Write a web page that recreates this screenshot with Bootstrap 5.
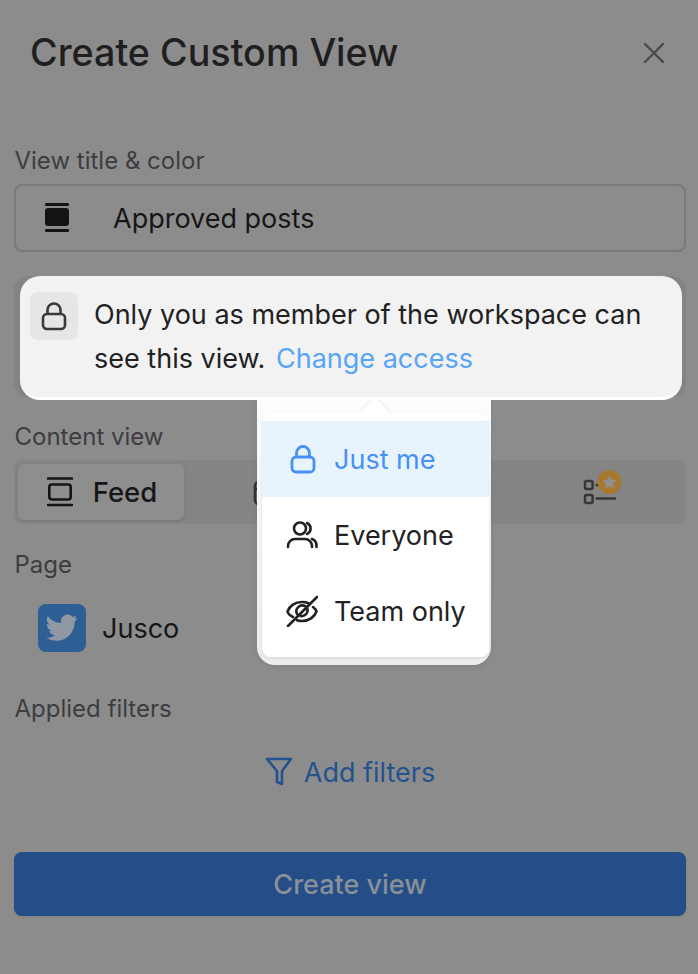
<!DOCTYPE html>
<html lang="en">
<head>
  <meta charset="UTF-8" />
  <meta name="viewport" content="width=device-width, initial-scale=1.0" />
  <title>Create Custom View</title>
  <link href="https://cdn.jsdelivr.net/npm/bootstrap@5.3.3/dist/css/bootstrap.min.css" rel="stylesheet">
  <style>
    html, body { height: 100%; }
    body { background: #8c8c8c; font-family: Inter, "Liberation Sans", sans-serif; color: #161617; overflow: hidden; }
    .sheet { position: relative; width: 698px; height: 974px; padding: 0 12px 0 14px; }
    .sheet-head { height: 106px; margin-bottom: 41px; padding: 0 19px 0 16px; }
    .sheet-title { font-size: 37.7px; font-weight: 500; margin: 0; color: #1f1f20; }
    .field-label { display: block; font-size: 24px; line-height: 28px; color: #3d3d40; margin: 0; padding-left: .5px; }
    .label-content { margin-top: 26px; }
    .label-page { margin-top: 27px; }
    .label-filters { margin-top: 43px; }
    .row-text { padding-top: 2px; }
    .title-box { height: 68px; margin-top: 9px; border: 2px solid #7a7a7a; border-radius: 8px; padding-left: 28px; font-size: 27px; gap: 43px; }
    .access-ghost { height: 121px; margin-top: 24px; background: #838383; border-radius: 14px; }
    .view-tabs { height: 64px; margin-top: 9px; background: #848484; border-radius: 8px; padding: 4px 4px; }
    .view-tab { flex: 1; height: 56px; border-radius: 6px; gap: 20px; font-size: 27.5px; font-weight: 500; }
    .view-tab.on { background: #8e8e8e; box-shadow: 0 1px 3px rgba(0,0,0,.12); }
    .feed-ico { margin-left: 2px; }
    .cal-ico { margin-right: 3px; }
    .star-ico { margin-left: 5px; overflow: visible; }
    .page-row { height: 48px; margin-top: 25px; padding-left: 24px; gap: 16px; font-size: 27px; }
    .page-mark { width: 48px; height: 48px; border-radius: 8px; background: #2d5f94; }
    .filter-link { color: #24528f; font-size: 27px; gap: 11px; height: 48px; margin-top: 25px; }
    .create-btn { height: 64px; margin-top: 56px; width: 100%; padding-top: 8px; background: #254e88; border: 0; border-radius: 8px; color: #8a9098; font-size: 27px; font-weight: 500; box-shadow: 0 1px 2px rgba(0,0,0,.1); }
    .create-btn:hover { background: #254e88; color: #8a9098; }
    .access-tip { position: absolute; left: 20px; top: 276px; width: 662px; height: 124px; background: #f2f2f2; border-bottom: 3px solid #fff; border-radius: 20px; padding: 16px 10px; gap: 16px; font-size: 27px; line-height: 44px; color: #212122; z-index: 2; }
    .tip-lock { flex: 0 0 48px; height: 48px; border-radius: 8px; background: #e6e6e6; }
    .tip-text { padding-top: 1px; }
    .tip-text a { color: #56a5f7; text-decoration: none; margin-left: 3px; }
    .access-menu { position: absolute; left: 257px; top: 397px; width: 234px; height: 268px; background: linear-gradient(#fdfdfd, #ececec); border-radius: 0 0 18px 18px; padding: 16px 2px 8px 5px; z-index: 1; box-shadow: 0 2px 4px rgba(0,0,0,.08); }
    .menu-arrow { position: absolute; left: 107px; top: 5px; width: 22px; height: 22px; background: #fff; transform: rotate(45deg); border-radius: 3px; box-shadow: 0 0 5px rgba(0,0,0,.09); }
    .menu-inner { position: relative; height: 100%; background: #fff; border-radius: 8px; padding: 8px 0; box-shadow: 0 1px 3px rgba(0,0,0,.1); }
    .menu-row { height: 76px; padding-left: 28px; gap: 18px; font-size: 27px; color: #222224; }
    .menu-row.on { background: #e8f4fd; color: #4791f5; }
    .menu-ico { margin: 0 -2px 0 -4px; }
    svg { display: block; flex: none; }
  </style>
</head>
<body>
  <div class="sheet">
    <div class="sheet-head d-flex align-items-center justify-content-between">
      <h1 class="sheet-title">Create Custom View</h1>
      <svg width="26" height="26" viewBox="0 0 26 26" fill="none" stroke="#4a4a4c" stroke-width="2.4" stroke-linecap="round"><path d="M4 4l18 18M22 4L4 22"/></svg>
    </div>

    <label class="field-label">View title &amp; color</label>
    <div class="title-box d-flex align-items-center">
      <svg width="26" height="30" viewBox="0 0 26 30" fill="#131315"><rect x="1" y="0" width="24" height="3" rx="1.2"/><rect x="1" y="5" width="24" height="18" rx="3"/><rect x="1" y="26" width="24" height="3" rx="1.2"/></svg>
      <span class="row-text">Approved posts</span>
    </div>

    <div class="access-ghost"></div>

    <label class="field-label label-content">Content view</label>
    <div class="view-tabs d-flex align-items-center">
      <div class="view-tab on d-flex align-items-center justify-content-center">
        <svg class="feed-ico" width="26" height="30" viewBox="0 0 26 30" fill="none" stroke="#141416" stroke-width="2.6"><path d="M1 1.500h24M1 28h24" stroke-linecap="round"/><rect x="2.300" y="7.500" width="21.400" height="15" rx="2.500"/></svg>
        <span class="row-text">Feed</span>
      </div>
      <div class="view-tab d-flex align-items-center justify-content-center">
        <svg class="cal-ico" width="28" height="28" viewBox="0 0 28 28" fill="none" stroke="#333335" stroke-width="2.600"><rect x="3" y="4" width="22" height="22" rx="4"/><path d="M3 11h22M9 1v5M19 1v5"/></svg>
      </div>
      <div class="view-tab"></div>
      <div class="view-tab d-flex align-items-center justify-content-center">
        <svg class="star-ico" width="40" height="36" viewBox="0 0 40 36" fill="none"><rect x="3" y="7" width="7.600" height="8" rx="1.500" stroke="#363638" stroke-width="2.400"/><rect x="3" y="21" width="7.600" height="8" rx="1.500" stroke="#363638" stroke-width="2.400"/><path d="M14.500 11h3M14.500 24.500h18.500" stroke="#363638" stroke-width="2.400" stroke-linecap="round"/><circle cx="27.500" cy="8" r="12" fill="#a8782f"/><path d="M27.500 1.200l2.200 4.400 4.900.7-3.500 3.400.8 4.900-4.400-2.300-4.400 2.300.8-4.900-3.500-3.400 4.900-.7z" fill="#8f8f8f"/></svg>
      </div>
    </div>

    <label class="field-label label-page">Page</label>
    <div class="page-row d-flex align-items-center">
      <div class="page-mark d-flex align-items-center justify-content-center">
        <svg width="32" height="28" viewBox="0 0 24 20" fill="#8f98a3"><path d="M23.600 2.400c-.9.400-1.800.7-2.800.8 1-.6 1.800-1.500 2.100-2.700-.9.600-2 1-3.100 1.200A4.900 4.900 0 0 0 11.400 6.200 13.900 13.900 0 0 1 1.300 1.100a4.900 4.900 0 0 0 1.500 6.500c-.8 0-1.500-.2-2.200-.6v.1c0 2.400 1.700 4.400 3.900 4.800-.7.200-1.500.2-2.200.1.600 2 2.400 3.400 4.600 3.400A9.800 9.800 0 0 1 0 17.400 13.900 13.900 0 0 0 7.500 19.600c9.100 0 14-7.500 14-14v-.6c1-.7 1.800-1.600 2.100-2.600z"/></svg>
      </div>
      <span class="row-text">Jusco</span>
    </div>

    <label class="field-label label-filters">Applied filters</label>
    <div class="filter-link d-flex align-items-center justify-content-center">
      <svg width="28" height="30" viewBox="0 0 28 30" fill="none" stroke="#24528f" stroke-width="2.600" stroke-linejoin="round"><path d="M2 2h24L17 14v13l-5-2V14z"/></svg>
      <span class="row-text">Add filters</span>
    </div>

    <button class="btn create-btn d-flex align-items-center justify-content-center">Create view</button>

    <div class="access-tip d-flex align-items-start">
      <div class="tip-lock d-flex align-items-center justify-content-center">
        <svg width="26" height="30" viewBox="0 0 26 30" fill="none" stroke="#3a3a3c" stroke-width="2.600"><rect x="2" y="13" width="22" height="15" rx="4"/><path d="M6.500 13V9a6.500 6.500 0 0 1 13 0v4"/></svg>
      </div>
      <div class="tip-text">Only you as member of the workspace can see this view. <a href="#">Change access</a></div>
    </div>

    <div class="access-menu">
      <div class="menu-arrow"></div>
      <div class="menu-inner">
        <div class="menu-row on d-flex align-items-center">
          <svg width="26" height="30" viewBox="0 0 26 30" fill="none" stroke="#4791f5" stroke-width="2.800"><rect x="2" y="13" width="22" height="15" rx="4"/><path d="M6.500 13V9a6.500 6.500 0 0 1 13 0v4"/></svg>
          <span class="row-text">Just me</span>
        </div>
        <div class="menu-row d-flex align-items-center">
          <svg class="menu-ico" width="32" height="28" viewBox="0 0 32 28" fill="none" stroke="#222224" stroke-width="2.600" stroke-linecap="round"><circle cx="14" cy="7.500" r="6"/><path d="M2 26v-1a7 7 0 0 1 7-7h10a7 7 0 0 1 7 7v1M21 2a6 6 0 0 1 0 11M26 18a7 7 0 0 1 4.500 6.500V26"/></svg>
          <span class="row-text">Everyone</span>
        </div>
        <div class="menu-row d-flex align-items-center">
          <svg class="menu-ico" width="32" height="32" viewBox="0 0 32 32" fill="none" stroke="#222224" stroke-width="2.600" stroke-linecap="round"><path d="M2 31L31 2"/><path d="M7 22C4 20.500 2 18.500 1.500 16.500 3.500 11 9 7 16 7c2.500 0 4.500.4 6.500 1.200M27 12c2 1.500 3.200 3 3.500 4.500C28.500 22 23 26 16 26c-2 0-3.500-.3-5-.8"/><path d="M11 19a6 6 0 0 1 8-8M21.500 14a6 6 0 0 1-7 7"/></svg>
          <span class="row-text">Team only</span>
        </div>
      </div>
    </div>
  </div>
  <script src="https://cdn.jsdelivr.net/npm/bootstrap@5.3.3/dist/js/bootstrap.bundle.min.js"></script>
</body>
</html>
